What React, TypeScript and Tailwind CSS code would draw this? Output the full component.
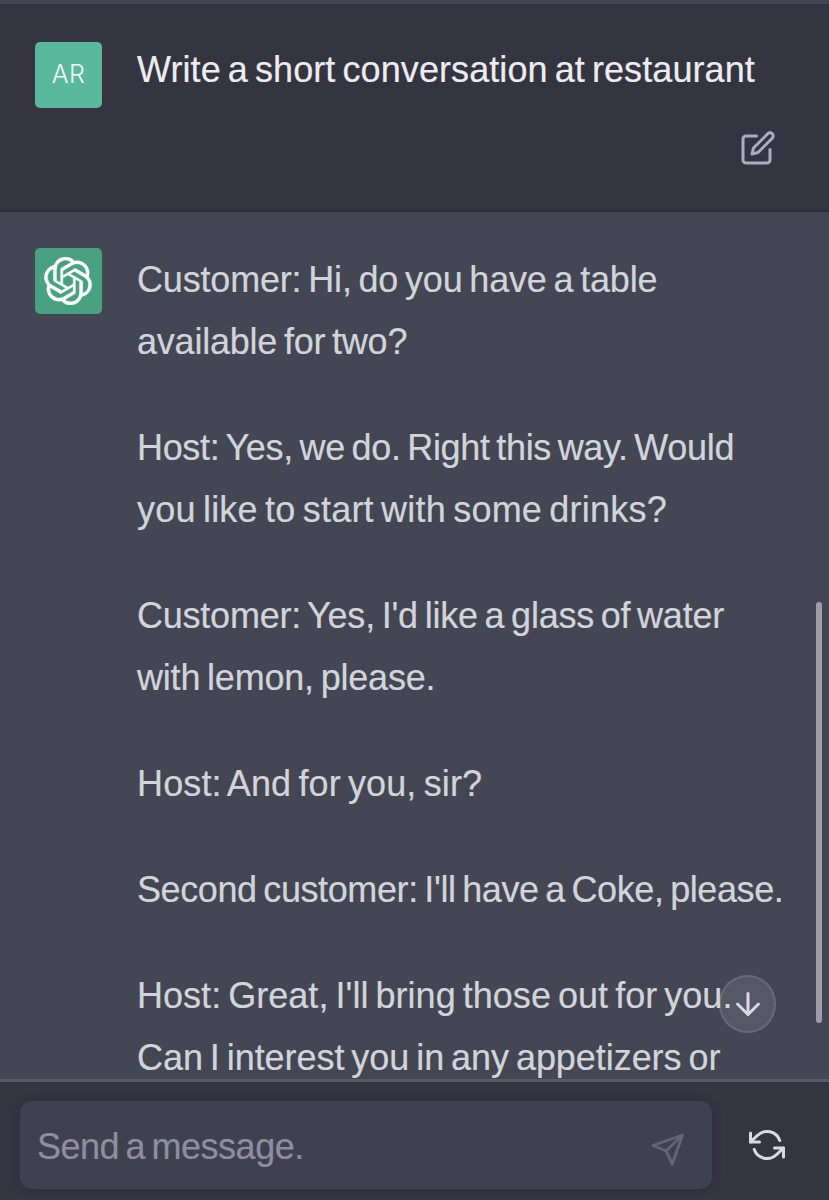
import React from 'react';
import clsx from 'clsx';
import { SiOpenai } from 'react-icons/si';

type Line = { text: string; className: string };

const answer: Line[][] = [
  [
    { text: 'Customer: Hi, do you have a table', className: 'tracking-[-0.18px]' },
    { text: 'available for two?', className: 'tracking-[-0.22px]' },
  ],
  [
    { text: 'Host: Yes, we do. Right this way. Would', className: 'tracking-[-0.33px]' },
    { text: 'you like to start with some drinks?', className: 'tracking-[0.22px]' },
  ],
  [
    { text: "Customer: Yes, I'd like a glass of water", className: 'tracking-[-0.23px]' },
    { text: 'with lemon, please.', className: 'tracking-[-0.2px]' },
  ],
  [{ text: 'Host: And for you, sir?', className: 'tracking-[0.13px]' }],
  [{ text: "Second customer: I'll have a Coke, please.", className: 'tracking-[-0.4px]' }],
  [
    { text: "Host: Great, I'll bring those out for you.", className: 'tracking-[0.03px]' },
    { text: 'Can I interest you in any appetizers or', className: 'tracking-[-0.05px]' },
  ],
];

const EditIcon = () => (
  <svg
    className="w-9 h-9"
    viewBox="0 0 24 24"
    fill="none"
    stroke="currentColor"
    strokeWidth="2"
    strokeLinecap="round"
    strokeLinejoin="round"
  >
    <path d="M11 4H4a2 2 0 0 0-2 2v14a2 2 0 0 0 2 2h14a2 2 0 0 0 2-2v-7" />
    <path d="M18.5 2.5a2.121 2.121 0 0 1 3 3L12 15l-4 1 1-4 9.5-9.5z" />
  </svg>
);

const ArrowDownIcon = () => (
  <svg
    className="w-9 h-9 shrink-0"
    viewBox="0 0 24 24"
    fill="none"
    stroke="currentColor"
    strokeWidth="2"
    strokeLinecap="round"
    strokeLinejoin="round"
  >
    <path d="M12 5v14M19 12l-7 7-7-7" />
  </svg>
);

const SendIcon = () => (
  <svg
    className="w-9 h-9"
    viewBox="0 0 36 36"
    fill="none"
    stroke="currentColor"
    strokeWidth="2.9"
    strokeLinejoin="round"
  >
    <path d="M32.5 3 3 13.5 16 19 22.3 32z" />
    <path d="M32.5 3 16 19" />
  </svg>
);

const RegenerateIcon = () => (
  <svg
    className="w-9 h-9"
    viewBox="0 0 24 24"
    fill="none"
    stroke="currentColor"
    strokeWidth="2"
    strokeLinecap="round"
    strokeLinejoin="round"
  >
    <path d="M1 4v6h6M23 20v-6h-6" />
    <path d="M20.49 9A9 9 0 0 0 5.64 5.64L1 10m22 4l-4.64 4.36A9 9 0 0 1 3.51 15" />
  </svg>
);

const UserMessage = () => (
  <div className="flex h-[208px] shrink-0 border-b-2 border-[#2d2e37] bg-[#343541] pl-[35px] pt-[38px]">
    <div className="mr-[35px] flex h-[66px] w-[67px] shrink-0 items-center justify-center rounded-[5px] bg-[#5ab89d] text-[25px] font-light tracking-[0.5px] text-[#f1fbf8] font-['Inter',sans-serif]">
      AR
    </div>
    <div className="-mt-[3px] flex flex-col">
      <div className="h-[62px] whitespace-nowrap leading-[62px] tracking-[0.08px] text-[#ececf1] [-webkit-text-stroke:0.2px] [word-spacing:-3px]">
        Write a short conversation at restaurant
      </div>
      <button type="button" className="ml-[603px] mt-[29px] h-9 w-9 text-[#acacbe]">
        <EditIcon />
      </button>
    </div>
  </div>
);

const AssistantMessage = () => (
  <div className="flex grow pl-[35px] pt-9">
    <div className="mr-[35px] flex h-[66px] w-[67px] shrink-0 items-center justify-center rounded-[5px] bg-[#4aa181] pr-px text-white">
      <SiOpenai className="h-12 w-12" stroke="currentColor" strokeWidth="0.2" />
    </div>
    <div className="flex flex-col gap-11 pt-px text-[#d1d5db] [-webkit-text-stroke:0.2px] [word-spacing:-3px]">
      {answer.map((lines, i) => (
        <p key={i}>
          {lines.map(({ text, className }) => (
            <span key={text} className={clsx('block h-[62px] whitespace-nowrap leading-[62px]', className)}>
              {text}
            </span>
          ))}
        </p>
      ))}
    </div>
  </div>
);

const Composer = () => (
  <div className="flex h-[121px] shrink-0 items-start border-t-[3px] border-[#5a5967] bg-[#343541] pl-5 pt-[19px]">
    <div className="flex h-[88px] w-[692px] items-center justify-between rounded-[12px] bg-[#40414f] pl-[17px] pr-[26px] shadow-[0_0_12px_rgba(0,0,0,0.12)]">
      <span className="pt-1 tracking-[-0.5px] text-[#8e8ea0] [-webkit-text-stroke:0.2px] [word-spacing:-3px]">
        Send a message.
      </span>
      <span className="mt-[9px] text-[#646573]">
        <SendIcon />
      </span>
    </div>
    <button type="button" className="ml-[37px] mt-[26px] text-[#d9d9e3]">
      <RegenerateIcon />
    </button>
  </div>
);

export default function App() {
  return (
    <div className="flex h-[1200px] w-[829px] flex-col overflow-hidden bg-[#444654] text-[36px] font-['Liberation_Sans',Arial,sans-serif]">
      <div className="relative flex h-[1079px] shrink-0 flex-col overflow-hidden pt-1">
        <UserMessage />
        <AssistantMessage />
        <button
          type="button"
          className="absolute left-[719px] top-[975px] flex h-[58px] w-[57px] items-center justify-center rounded-full border-2 border-white/10 bg-white/10 text-[#d9d9e3]"
        >
          <ArrowDownIcon />
        </button>
        <div className="absolute left-[816px] top-[602px] h-[421px] w-[6px] rounded-full bg-[#9d9ca7]" />
      </div>
      <Composer />
    </div>
  );
}
